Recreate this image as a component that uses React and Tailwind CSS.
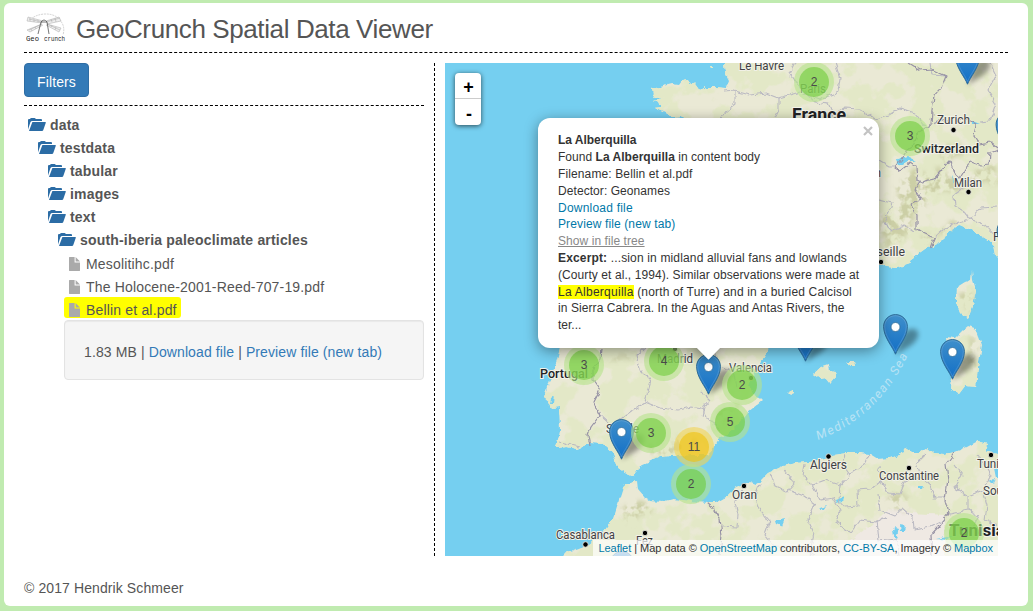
import React from "react";

const LANDS = [
  // France, Switzerland, Italy
  "723,55 725,72 729,80 726,88 716,87 705,87 700,91 695,84 688,80 682,81 679,85 672,84 660,87 652,89 653,96 661,99 654,101 661,105 661,107 654,108 665,113 672,117 681,116 690,124 700,200 730,262 879,265 887,267 897,268 909,264 911,259 925,249 932,246 944,240 950,231 958,226 967,228 978,234 988,240 993,245 995,255 1002,264 1006,55",
  // Iberia
  "562,330 560,348 557,360 552,373 548,387 544,398 548,401 551,408 559,407 560,430 556,448 567,447 577,449 590,443 603,444 612,452 614,457 617,467 625,473 632,476 636,473 640,466 653,460 660,457 670,456 693,455 707,455 713,448 720,437 727,434 737,425 748,412 763,400 760,397 753,395 749,385 752,377 760,362 768,350 775,330",
  // Maghreb
  "560,560 568,552 587,545 596,538 605,530 613,519 619,500 624,485 637,481 638,490 644,497 650,501 662,502 673,499 690,501 707,503 716,503 725,498 736,487 745,484 750,482 755,484 760,481 768,473 783,466 795,463 810,462 825,458 833,455 847,453 860,453 870,454 878,459 890,458 900,455 905,448 913,453 920,453 927,448 933,453 945,454 955,452 967,447 978,441 988,444 985,452 1006,455 1006,570",
  // Corsica
  "972,271 973,280 976,290 973,305 968,319 960,313 956,302 957,287 965,282 971,280",
  // Sardinia
  "946,337 955,338 963,330 968,326 976,329 982,345 978,367 976,387 965,386 959,394 951,389 952,377 953,360 948,350",
  // Balearics
  "813,374 820,368 828,365 829,370 837,371 834,378 830,383 826,378 820,379",
  "846,362 855,362 856,366 851,366",
  "788,393 794,390 794,393 790,395",
  "709,66 713,66 713,68 710,68",
];

const COUNTRY_LINES = [
  "909,63 920,70 931,69 946,76 942,86 934,96 932,110 931,125 927,127 918,132 914,145 907,150 901,160 895,168 900,171 910,163 916,167 917,180 921,182 934,179 940,172 950,161 954,173 960,178 966,168 970,162 981,166 989,165 990,153 998,150",
  "932,124 945,120 960,119 969,120 976,124 974,136 979,144 991,142 998,148",
  "920,182 915,190 921,200 911,205 917,216 917,229 923,233 934,238 930,248",
  "601,348 600,360 593,369 593,380 600,390 594,402 600,415 591,427 588,435 590,446",
  "707,503 715,510 720,520 722,535 720,556",
  "955,452 946,464 948,480 945,500 949,513 940,525 931,535 932,556",
];

const REGION_LINES = [
  "735,91 750,95 766,93 779,98 800,92 820,99 838,92 840,78 835,63",
  "795,63 790,73 800,88 815,102 828,104 833,115 845,108 860,109 875,119 889,115 900,108 915,113 925,126",
  "723,91 735,90 735,104 727,110 721,118",
  "779,98 779,110 775,118",
  "879,160 889,166 896,166",
  "930,63 932,75 946,76",
  "990,63 996,75 988,90 996,104 990,121 979,122",
  "879,200 892,203 889,212 884,222 892,230 905,226 914,232",
  "970,180 961,190 954,195 955,206 965,212 970,219 980,208 998,207",
  "934,238 945,228 958,222 970,219 985,225 998,239",
  "645,348 637,355 640,370 651,381 647,395 645,402 634,409 622,418 611,424 600,414",
  "645,402 660,408 678,410 691,407 702,409 706,416 712,423 720,430",
  "702,416 704,407 710,400 700,390",
  "560,442 579,447",
  "737,387 733,372 720,367 713,350",
  "722,526 737,527 738,515 735,502 742,490",
  "760,483 755,496 761,511 770,521 765,535 775,547 800,548 815,556",
  "770,473 775,486 788,492 795,484 784,470",
  "788,490 804,496 815,504 808,520 814,533 809,556",
  "805,464 803,476 812,485 825,480 840,485 850,474 864,465 870,455",
  "812,485 820,500 833,498 840,510 836,522 850,532 860,520 875,522 887,518",
  "840,485 839,500 845,507 858,506 857,490 871,489 881,481 879,467",
  "850,474 843,464 846,454",
  "881,481 888,493 900,494 905,482 920,476 916,464 925,455",
  "878,494 880,510 895,516 902,508 913,518 914,530 930,527 946,519",
  "920,476 930,485 934,498 946,498",
  "887,518 877,520 879,541 896,539 899,556",
  "955,465 962,475 955,488 968,496 968,510 950,514",
  "968,496 983,490 991,476 985,465 978,455",
  "983,490 987,505 985,520 998,526",
  "968,510 979,516 972,528 960,532",
];

const RELIEF = [
  "880,220 887,214 900,200 895,188 912,172 928,176 940,168 951,184 940,190 922,205 916,222 900,240 885,250",
  "905,170 935,175 960,180 985,168 998,165 998,186 978,182 965,192 948,193",
  "940,150 955,145 970,148 960,158 945,162",
  "920,236 935,236 950,224 962,219 955,227 944,234 930,243",
  "640,349 628,357 612,358 610,362 625,361 645,355",
  "640,447 662,449 680,437 695,440 700,448 680,453 655,455",
  "712,430 716,418 725,410 738,405 730,420",
  "620,510 634,503 648,505 655,512 640,516 628,524",
  "885,500 900,495 912,502 905,512 890,508",
  "962,295 970,290 972,305 966,312",
  "970,338 978,348 974,370 968,362",
];

const LABELS = [
  { t: "Le Havre", x: 739, y: 70, w: 45 },
  { t: "Paris", x: 800, y: 93, w: 26 },
  { t: "Zurich", x: 937, y: 124, w: 33, dot: [953.5, 130] },
  { t: "Milan", x: 954, y: 187, w: 28, dot: [968.5, 192] },
  { t: "Lyon", x: 858, y: 177, w: 23 },
  { t: "Marseille", x: 855, y: 256, w: 50, dot: [881, 262] },
  { t: "Florence", x: 993, y: 241, w: 46 },
  { t: "Madrid", x: 657, y: 363, w: 36, dot: [675, 349] },
  { t: "Valencia", x: 729, y: 372, w: 43, dot: [751, 378] },
  { t: "Seville", x: 606, y: 433, w: 33 },
  { t: "Casablanca", x: 556, y: 539, w: 59, dot: [585.5, 544.5] },
  { t: "Fez", x: 636, y: 545, w: 17, dot: [645, 533] },
  { t: "Oran", x: 732, y: 499, w: 25, dot: [744, 486] },
  { t: "Algiers", x: 810, y: 469, w: 37, dot: [828.5, 456.5] },
  { t: "Constantine", x: 879, y: 480, w: 60, dot: [909, 468] },
  { t: "Tunis", x: 977, y: 468, w: 28, dot: [991, 455] },
  { t: "Sousse", x: 983, y: 495, w: 38 },
];

const COUNTRIES = [
  { t: "France", x: 792, y: 121, w: 54, s: 18, b: 700 },
  { t: "Switzerland", x: 914, y: 153, w: 65, s: 12.5, b: 500 },
  { t: "Portugal", x: 540, y: 378, w: 48, s: 12.5, b: 500 },
  { t: "Tunisia", x: 949, y: 536, w: 56, s: 17, b: 700 },
];

const PINS = [
  [967.5, 85],
  [1008, 153],
  [1009, 259],
  [895.5, 355],
  [805.5, 362],
  [952.5, 380],
  [708.5, 395],
  [621.5, 460],
  [622, 592],
];

const CLUSTERS = [
  [814, 82, 2],
  [910, 136, 3],
  [664, 361, 4],
  [584, 365, 3],
  [742, 385, 2],
  [730, 422, 5],
  [651, 433, 3],
  [694, 447, 11],
  [691, 484, 2],
  [964, 533, 2],
];

function Basemap() {
  return (
    <svg className="block h-full w-full" viewBox="445 63 553 493">
      <defs>
        <filter id="rough" filterUnits="userSpaceOnUse" x="440" y="55" width="570" height="510">
          <feTurbulence type="fractalNoise" baseFrequency="0.16" numOctaves="2" seed="4" result="n" />
          <feDisplacementMap in="SourceGraphic" in2="n" scale="5.5" xChannelSelector="R" yChannelSelector="G" />
        </filter>
        <filter id="vegetation" filterUnits="userSpaceOnUse" x="440" y="55" width="570" height="510" colorInterpolationFilters="sRGB">
          <feTurbulence type="fractalNoise" baseFrequency="0.035" numOctaves="4" seed="11" result="n" />
          <feColorMatrix in="n" type="matrix" values="0 0 0 0 0.89  0 0 0 0 0.91  0 0 0 0 0.78  12 0 0 0 -5.2" result="g" />
          <feComposite in="g" in2="SourceGraphic" operator="in" />
        </filter>
        <filter id="relief" filterUnits="userSpaceOnUse" x="440" y="55" width="570" height="510" colorInterpolationFilters="sRGB">
          <feTurbulence type="fractalNoise" baseFrequency="0.11" numOctaves="3" seed="7" result="n" />
          <feColorMatrix in="n" type="matrix" values="0 0 0 0 0.8  0 0 0 0 0.81  0 0 0 0 0.65  0 6 0 0 -2.7" result="g" />
          <feDisplacementMap in="SourceGraphic" in2="n" scale="16" xChannelSelector="R" yChannelSelector="G" result="s" />
          <feGaussianBlur in="s" stdDeviation="2" result="b" />
          <feComposite in="g" in2="b" operator="in" />
        </filter>
        <clipPath id="desert">
          <path d="M820 560 L850 541 L872 524 L890 508 L912 513 L945 515 L945 560Z" />
        </clipPath>
        <path id="seaCurve" d="M818 440 Q 878 418 908 355" />
      </defs>
      <rect x="440" y="55" width="570" height="510" fill="#75cff0" />
      <g filter="url(#rough)" fill="#eae9d5">
        {LANDS.map((p, i) => (
          <polygon key={i} points={p} />
        ))}
      </g>
      <g filter="url(#vegetation)">
        <g filter="url(#rough)">
          {LANDS.map((p, i) => (
            <polygon key={i} points={p} />
          ))}
        </g>
      </g>
      <g filter="url(#rough)">
        <rect x="820" y="505" width="125" height="60" fill="#efe9e3" clipPath="url(#desert)" />
        <g fill="#75cff0">
          <path d="M893 530l4-3 2 6-2 5-3-2zM899 525l7 1-1 5-5 0zM776 521l9-2-3 7-5-2zM836 500l8-3-1 4-6 2zM821 508l6-2-3 4zM918 486l6 0-1 3-5 0zM897 160l11-3 9 4-9 0-9 5zM951 175l3 6 0 7-2-1zM970 120l10 4-8 0zM551 399l4-3-1 7-4 0zM990 480l5-1-2 4zM936 539l16-3-6 4zM994 468l6-8v20l-4-2z" />
        </g>
      </g>
      <g filter="url(#relief)" fill="#000">
        {RELIEF.map((p, i) => (
          <polygon key={i} points={p} />
        ))}
      </g>
      <g filter="url(#rough)" fill="none" stroke="#bab9c2" strokeWidth="1.1" strokeLinejoin="round">
        {REGION_LINES.map((p, i) => (
          <polyline key={i} points={p} />
        ))}
      </g>
      <g filter="url(#rough)" fill="none" stroke="#9792a5" strokeWidth="1.2" strokeLinejoin="round">
        {COUNTRY_LINES.map((p, i) => (
          <polyline key={i} points={p} />
        ))}
      </g>
      <text className="font-['Roboto'] text-[12.5px] italic" fill="#b9e3f4" letterSpacing="1.6">
        <textPath href="#seaCurve" textLength="128">Mediterranean Sea</textPath>
      </text>
      {LABELS.map((l) => (
        <g key={l.t}>
          <text
            x={l.x}
            y={l.y}
            textLength={l.w}
            lengthAdjust="spacingAndGlyphs"
            className="font-['Roboto'] text-[12px]"
            fill="#404044"
            stroke="#f1f1e6"
            strokeWidth="2"
            paintOrder="stroke"
          >
            {l.t}
          </text>
          {l.dot && <circle cx={l.dot[0]} cy={l.dot[1]} r="2.7" fill="#000" stroke="#f3f3ea" strokeWidth="0.8" />}
        </g>
      ))}
      {COUNTRIES.map((l) => (
        <text
          key={l.t}
          x={l.x}
          y={l.y}
          textLength={l.w}
          lengthAdjust="spacingAndGlyphs"
          className="font-['Roboto']"
          fontSize={l.s}
          fontWeight={l.b}
          fill="#222226"
          stroke="#f3f3ea"
          strokeWidth="2"
          paintOrder="stroke"
        >
          {l.t}
        </text>
      ))}
    </svg>
  );
}

function Markers() {
  return (
    <svg className="absolute inset-0 h-full w-full" viewBox="445 63 553 493">
      <defs>
        <linearGradient id="pinFill" x1="0" y1="0" x2="0" y2="1">
          <stop offset="0" stopColor="#3f8fcb" />
          <stop offset="1" stopColor="#126fc6" />
        </linearGradient>
        <filter id="soft" x="-40%" y="-40%" width="180%" height="180%">
          <feGaussianBlur stdDeviation="2.4" />
        </filter>
      </defs>
      {PINS.map(([x, y]) => (
        <path key={x} transform={`translate(${x} ${y})`} d="M0 0 L7 -20 Q14 -29 21 -25 Q26 -19 16 -10 Z" fill="#000" opacity="0.36" filter="url(#soft)" />
      ))}
      {PINS.map(([x, y]) => (
        <g key={x} transform={`translate(${x} ${y})`}>
          <path
            d="M0 -0.8 C-2.6 -8 -11.9 -17.5 -11.9 -28.4 C-11.9 -35.2 -6.6 -40.4 0 -40.4 C6.6 -40.4 11.9 -35.2 11.9 -28.4 C11.9 -17.5 2.6 -8 0 -0.8Z"
            fill="url(#pinFill)"
            stroke="#2e6c97"
            strokeWidth="1"
          />
          <path
            d="M0 -3.5 C-3 -11 -10.8 -19 -10.8 -28.4 C-10.8 -34.6 -6 -39.3 0 -39.3 C6 -39.3 10.8 -34.6 10.8 -28.4 C10.8 -19 3 -11 0 -3.5Z"
            fill="none"
            stroke="#fff"
            strokeOpacity="0.14"
          />
          <circle cx="0" cy="-28" r="4.5" fill="#fff" stroke="#2e6c97" strokeWidth="0.8" />
        </g>
      ))}
      {CLUSTERS.map(([x, y, n]) => (
        <g key={`${x}-${y}`}>
          <circle cx={x} cy={y} r="20" fill={n > 9 ? "#f1d357" : "#b5e28c"} fillOpacity="0.6" />
          <circle cx={x} cy={y} r="15" fill={n > 9 ? "#f0c20c" : "#6ecc39"} fillOpacity="0.6" />
          <text x={x} y={y + 4} textAnchor="middle" className="font-['Liberation_Sans'] text-[12px]" fill="#4b4b4b">
            {n}
          </text>
        </g>
      ))}
    </svg>
  );
}

function Logo() {
  return (
    <svg className="mt-px h-[30px] w-10 shrink-0" viewBox="0 0 40 30" fill="none" stroke="#a6a6a6" strokeWidth="0.5">
      <path d="M5 6 Q11 1 20 1 Q31 1 36 10 Q39 15 37 22" strokeDasharray="2 .8" />
      <path d="M17 8 L2 4 L1 8 L16 10 M16 11 L1 17 L4 19 L17 12 M20 8 L33 4 L35 8 L21 11 M21 11 L35 15 L33 19 L20 12 M4 5v3M8 6v3M12 7v2M5 16l1 2M9 14l1 2M25 6l1 3M29 5l1 4M26 12l-1 2M30 14l-1 3M3 6l13 3M3 17l13-6M20 9l14-4M21 11l13 6" fill="#eee" />
      <path d="M15 9 Q18 5 21 9 M15 9 L12 21 M21 9 L23 21 M15 9h6" stroke="#555" strokeWidth="0.8" />
      <text x="0" y="27.5" textLength="13" lengthAdjust="spacingAndGlyphs" className="font-['Liberation_Mono'] text-[8px]" fill="#222" stroke="none">Geo</text>
      <text x="18" y="27.5" textLength="21" lengthAdjust="spacingAndGlyphs" className="font-['Liberation_Mono'] text-[8px]" fill="#222" stroke="none">crunch</text>
    </svg>
  );
}

function FolderIcon() {
  return (
    <svg className="h-[13px] w-[18px] shrink-0" viewBox="0 0 18 13" fill="#2b6ca5">
      <path d="M0 11.5V2Q0 1 1 1H2Q2.4 0 3.4 0H6.4Q7.4 0 7.8 1H13Q14 1 14 2V3H4.2Q3 3 2.5 4.1Z" />
      <path d="M4.4 3.9H17.2Q18.1 3.9 17.8 4.8L15.2 12.3Q14.9 13 14 13H1Z" />
    </svg>
  );
}

function FileIcon() {
  return (
    <svg className="h-[14px] w-[11px] shrink-0" viewBox="0 0 11 14" fill="#aaa">
      <path d="M0 .4Q0 0 .4 0H5.6V5.4H11V13.6Q11 14 10.6 14H.4Q0 14 0 13.6Z" />
      <path d="M6.6 0L11 4.4H6.6Z" />
    </svg>
  );
}

const FOLDERS = [
  { name: "data", pad: "pl-1" },
  { name: "testdata", pad: "pl-[14px]" },
  { name: "tabular", pad: "pl-6" },
  { name: "images", pad: "pl-6" },
  { name: "text", pad: "pl-6" },
  { name: "south-iberia paleoclimate articles", pad: "pl-[34px]" },
];

const FILES = ["Mesolitihc.pdf", "The Holocene-2001-Reed-707-19.pdf", "Bellin et al.pdf"];

function Sidebar() {
  return (
    <aside className="w-[400px] shrink-0">
      <button className="block h-[34px] w-[65px] rounded-[4px] border border-[#2e6da4] bg-[#337ab7] pt-[3px] text-[14px] leading-5 tracking-[0.1px] text-white">
        Filters
      </button>
      <div className="mt-2 border-t border-dashed border-black" />
      <ul className="mt-[7px]">
        {FOLDERS.map((f) => (
          <li key={f.name} className={`flex h-[23px] items-center gap-1 font-bold tracking-[0.18px] ${f.pad}`}>
            <FolderIcon />
            <span>{f.name}</span>
          </li>
        ))}
      </ul>
      <ul className="flex flex-col items-start gap-0.5 pl-10">
        {FILES.map((f, i) => (
          <li key={f} className={`flex h-[21px] items-center gap-1.5 rounded-[3px] pr-1 pl-[5px] tracking-[0.17px] ${i === 2 ? "bg-[#ff0]" : ""}`}>
            <div className="pt-1">
              <FileIcon />
            </div>
            <span className="pt-1">{f}</span>
          </li>
        ))}
      </ul>
      <div className="mt-[2px] ml-10 flex h-[60px] items-center rounded-[4px] border border-[#e3e3e3] bg-[#f5f5f5] pt-1 pl-[19px] tracking-[0.11px] shadow-[inset_0_1px_1px_rgba(0,0,0,0.05)]">
        <p className="whitespace-pre">
          1.83 MB | <a className="text-[#337ab7]">Download file</a> | <a className="text-[#337ab7]">Preview file (new tab)</a>
        </p>
      </div>
    </aside>
  );
}

function Popup() {
  return (
    <div className="absolute top-[55px] left-[93px] w-[341px]">
      <div className="absolute top-[221px] left-[162px] h-[17px] w-[17px] rotate-45 bg-white shadow-[0_3px_14px_rgba(0,0,0,0.4)]" />
      <div className="relative h-[230px] rounded-xl bg-white px-5 pt-[14.4px] text-[12px] leading-[16.8px] whitespace-nowrap text-[#333] shadow-[0_3px_14px_rgba(0,0,0,0.4)]">
        <p className="tracking-[-0.03px]"><b>La Alberquilla</b></p>
        <p className="tracking-[0.03px]">Found <b>La Alberquilla</b> in content body</p>
        <p className="tracking-[0.12px]">Filename: Bellin et al.pdf</p>
        <p className="tracking-[0.07px]">Detector: Geonames</p>
        <p className="tracking-[0.22px]"><a className="text-[#0078a8]">Download file</a></p>
        <p className="tracking-[0.12px]"><a className="text-[#0078a8]">Preview file (new tab)</a></p>
        <p className="tracking-[0.07px]"><a className="text-[#888] underline">Show in file tree</a></p>
        <p className="tracking-[0.15px]"><b>Excerpt:</b> ...sion in midland alluvial fans and lowlands</p>
        <p className="tracking-[0.08px]">(Courty et al., 1994). Similar observations were made at</p>
        <p className="tracking-[0.16px]">
          <span className="bg-[#ff0] tracking-[0.26px]">La Alberquilla</span> (north of Turre) and in a buried Calcisol
        </p>
        <p className="tracking-[0.08px]">in Sierra Cabrera. In the Aguas and Antas Rivers, the</p>
        <p>ter...</p>
      </div>
      <div className="absolute top-[221px] left-[162px] h-[17px] w-[17px] rotate-45 bg-white" />
      <svg className="absolute top-2 right-[6px] h-[10px] w-[10px]" viewBox="0 0 10 10" stroke="#c3c3c3" strokeWidth="2.2">
        <path d="M1 1L9 9M9 1L1 9" />
      </svg>
    </div>
  );
}

function MapView() {
  return (
    <section className="relative h-[493px] w-[553px] shrink-0 overflow-hidden font-['Liberation_Sans',sans-serif]">
      <Basemap />
      <Markers />
      <Popup />
      <div className="absolute top-[10px] left-[10px] w-[26px] rounded-[4px] bg-white text-center text-[18px] font-bold text-black shadow-[0_1px_5px_rgba(0,0,0,0.65)]">
        <div className="h-[26px] border-b border-[#ccc] pl-px leading-[29px]">+</div>
        <div className="h-[26px] pl-0.5 leading-[30px]">-</div>
      </div>
      <div className="absolute right-0 bottom-0 h-4 bg-white/70 px-[5px] text-[11px] leading-4 tracking-[-0.035px] whitespace-nowrap text-[#333]">
        <a className="text-[#0078a8]">Leaflet</a> | Map data © <a className="text-[#0078a8]">OpenStreetMap</a> contributors,{" "}
        <a className="text-[#0078a8]">CC-BY-SA</a>, Imagery © <a className="text-[#0078a8]">Mapbox</a>
      </div>
    </section>
  );
}

export default function App() {
  return (
    <div className="h-[611px] w-[1033px] overflow-hidden bg-[#c0ebb0] pt-[3px] pl-1 font-['Liberation_Sans',sans-serif] text-[14px] leading-5 text-[#555]">
      <div className="h-[603px] w-[1024px] rounded-md bg-white pl-5">
        <header className="flex h-[50px] w-[984px] border-b border-dashed border-black pt-[9px] pl-0.5">
          <Logo />
          <h1 className="ml-[10px] pt-[2px] text-[26px] leading-[30px] tracking-[-0.39px] whitespace-nowrap">GeoCrunch Spatial Data Viewer</h1>
        </header>
        <main className="flex pt-[10px]">
          <Sidebar />
          <div className="mr-[10px] ml-[10px] h-[493px] w-px border-l border-dashed border-black" />
          <MapView />
        </main>
        <footer className="pt-[22px] tracking-[0.1px]">© 2017 Hendrik Schmeer</footer>
      </div>
    </div>
  );
}
